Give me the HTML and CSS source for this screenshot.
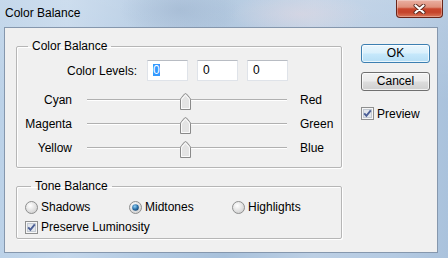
FILE: index.html
```html
<!DOCTYPE html>
<html>
<head>
<meta charset="utf-8">
<link rel="stylesheet" href="styles.css">
</head>
<body>
<div class="window">
  <div class="titlebar">
    <span class="title">Color Balance</span>
    <div class="close">
      <svg width="13" height="10" viewBox="0 0 13 10"><path d="M2.5 1.5 L10.5 8.5 M10.5 1.5 L2.5 8.5" stroke="#5a2a20" stroke-width="4" stroke-linecap="round"/><path d="M2.5 1.5 L10.5 8.5 M10.5 1.5 L2.5 8.5" stroke="#fff" stroke-width="2.2" stroke-linecap="round"/></svg>
    </div>
  </div>
  <div class="client">
    <div class="main">
      <fieldset class="group g1">
        <legend>Color Balance</legend>
        <div class="levels">
          <span class="lvl-label">Color Levels:</span>
          <span class="input"><span class="sel">0</span></span>
          <span class="input">0</span>
          <span class="input">0</span>
        </div>
        <div class="srow">
          <span class="sl">Cyan</span>
          <span class="track"><span class="thumb" style="left:93px"><svg width="11" height="17" viewBox="0 0 11 17"><path d="M0.5 16.5 V6.5 Q0.5 5.5 1.5 4.5 L4.5 1 Q5.5 0 6.5 1 L9.5 4.5 Q10.5 5.5 10.5 6.5 V16.5 Z" fill="#e4e4e4" stroke="#8a8a8a"/><path d="M1.5 15.5 V6.8 L5.5 2 L9.5 6.8 V15.5 Z" fill="none" stroke="#fafafa"/></svg></span></span>
          <span class="sr">Red</span>
        </div>
        <div class="srow">
          <span class="sl">Magenta</span>
          <span class="track"><span class="thumb" style="left:93px"><svg width="11" height="17" viewBox="0 0 11 17"><path d="M0.5 16.5 V6.5 Q0.5 5.5 1.5 4.5 L4.5 1 Q5.5 0 6.5 1 L9.5 4.5 Q10.5 5.5 10.5 6.5 V16.5 Z" fill="#e4e4e4" stroke="#8a8a8a"/><path d="M1.5 15.5 V6.8 L5.5 2 L9.5 6.8 V15.5 Z" fill="none" stroke="#fafafa"/></svg></span></span>
          <span class="sr">Green</span>
        </div>
        <div class="srow">
          <span class="sl">Yellow</span>
          <span class="track"><span class="thumb" style="left:93px"><svg width="11" height="17" viewBox="0 0 11 17"><path d="M0.5 16.5 V6.5 Q0.5 5.5 1.5 4.5 L4.5 1 Q5.5 0 6.5 1 L9.5 4.5 Q10.5 5.5 10.5 6.5 V16.5 Z" fill="#e4e4e4" stroke="#8a8a8a"/><path d="M1.5 15.5 V6.8 L5.5 2 L9.5 6.8 V15.5 Z" fill="none" stroke="#fafafa"/></svg></span></span>
          <span class="sr">Blue</span>
        </div>
      </fieldset>
      <fieldset class="group g2">
        <legend>Tone Balance</legend>
        <div class="radios">
          <span class="opt"><svg width="13" height="13" viewBox="0 0 13 13"><defs><radialGradient id="r1" cx="0.4" cy="0.35" r="0.7"><stop offset="0" stop-color="#ffffff"/><stop offset="1" stop-color="#cfcfcf"/></radialGradient></defs><circle cx="6.5" cy="6.5" r="6" fill="url(#r1)" stroke="#8e8f8f"/></svg>Shadows</span>
          <span class="opt"><svg width="13" height="13" viewBox="0 0 13 13"><defs><radialGradient id="r2" cx="0.4" cy="0.35" r="0.7"><stop offset="0" stop-color="#ffffff"/><stop offset="1" stop-color="#cfcfcf"/></radialGradient><radialGradient id="d2" cx="0.4" cy="0.35" r="0.7"><stop offset="0" stop-color="#8fd0f5"/><stop offset="0.6" stop-color="#2a6fa8"/><stop offset="1" stop-color="#15446e"/></radialGradient></defs><circle cx="6.5" cy="6.5" r="6" fill="url(#r2)" stroke="#8e8f8f"/><circle cx="6.5" cy="6.5" r="3.3" fill="url(#d2)"/></svg>Midtones</span>
          <span class="opt"><svg width="13" height="13" viewBox="0 0 13 13"><defs><radialGradient id="r3" cx="0.4" cy="0.35" r="0.7"><stop offset="0" stop-color="#ffffff"/><stop offset="1" stop-color="#cfcfcf"/></radialGradient></defs><circle cx="6.5" cy="6.5" r="6" fill="url(#r3)" stroke="#8e8f8f"/></svg>Highlights</span>
        </div>
        <div class="check-row">
          <span class="opt"><svg width="13" height="13" viewBox="0 0 13 13"><rect x="0.5" y="0.5" width="12" height="12" fill="#f6f6f6" stroke="#8e8f8f"/><rect x="2.5" y="2.5" width="8" height="8" fill="#e2e6ec" stroke="#c3cad3"/><path d="M3.2 6.3 L5.4 8.8 L9.8 3.4" fill="none" stroke="#4b5f96" stroke-width="1.9"/></svg>Preserve Luminosity</span>
        </div>
      </fieldset>
    </div>
    <div class="side">
      <div class="btn ok">OK</div>
      <div class="btn cancel">Cancel</div>
      <div class="preview"><svg width="13" height="13" viewBox="0 0 13 13"><rect x="0.5" y="0.5" width="12" height="12" fill="#f6f6f6" stroke="#8e8f8f"/><rect x="2.5" y="2.5" width="8" height="8" fill="#e2e6ec" stroke="#c3cad3"/><path d="M3.2 6.3 L5.4 8.8 L9.8 3.4" fill="none" stroke="#4b5f96" stroke-width="1.9"/></svg>Preview</div>
    </div>
  </div>
</div>
</body>
</html>
```
FILE: styles.css
```css
* { box-sizing: border-box; }
html, body { margin: 0; padding: 0; }
body {
  width: 448px;
  height: 258px;
  overflow: hidden;
  font-family: "Liberation Sans", Arial, sans-serif;
  font-size: 12px;
  color: #000;
}
.window {
  width: 448px;
  height: 258px;
  display: flex;
  flex-direction: column;
  background:
    radial-gradient(ellipse 70px 22px at 300px 14px, rgba(225,215,225,0.55), rgba(225,215,225,0) 100%),
    radial-gradient(ellipse 60px 30px at 180px 10px, rgba(150,172,200,0.45), rgba(150,172,200,0) 100%),
    linear-gradient(to bottom, rgba(255,255,255,0.15), rgba(255,255,255,0) 40%),
    linear-gradient(to right, #bcd2e8 0%, #c4d7eb 15%, #b3cae2 32%, #a8c1db 50%, #bccfe4 70%, #b4cae2 88%, #aac2dc 100%);
}
.titlebar {
  height: 27px;
  display: flex;
  align-items: flex-start;
}
.title {
  padding: 6px 0 0 5px;
  line-height: 14px;
  color: #000;
}
.close {
  margin-left: auto;
  margin-right: 5px;
  width: 47px;
  height: 18px;
  border: 1px solid #6a2418;
  border-top: none;
  border-radius: 0 0 4px 4px;
  background: linear-gradient(to bottom, #eab0a2 0%, #df907b 42%, #c9472e 52%, #c5432a 72%, #d9775a 100%);
  box-shadow: inset 0 0 0 1px rgba(255,255,255,0.3);
  display: flex;
  align-items: center;
  justify-content: center;
}
.client {
  flex: 1;
  margin: 0 10px 5px 4px;
  background: #f0f0f0;
  border: 1px solid #8597ad;
  display: grid;
  grid-template-columns: 326px 69px;
  column-gap: 19px;
  align-items: start;
  padding: 11px 0 0 11px;
}
.group {
  margin: 0;
  padding: 0;
  min-width: 0;
  border: 1px solid #b6b6b6;
  border-radius: 2px;
  box-shadow: 1px 1px 0 #fff, inset 1px 1px 0 #fff;
}
.group legend {
  padding: 0 4px;
  line-height: 14px;
}
.g1 { padding: 7px 0 7px 0; }
.g1 legend { margin-left: 11px; }
.g2 { margin-top: 11px; padding: 5px 0 2px 8px; }
.g2 legend { margin-left: 6px; }

.levels {
  display: flex;
  align-items: center;
  height: 21px;
}
.lvl-label {
  width: 120px;
  text-align: right;
  margin-right: 10px;
}
.input {
  width: 41px;
  height: 21px;
  margin-right: 9px;
  background: #fff;
  border: 1px solid #dfe3e9;
  border-top-color: #b8bcc3;
  padding-left: 5px;
  line-height: 19px;
}
.sel {
  background: #3399ff;
  color: #fff;
  display: inline-block;
  line-height: 12px;
}
.srow {
  display: grid;
  grid-template-columns: 57px 200px auto;
  column-gap: 13px;
  align-items: center;
  height: 24px;
}
.g1 .levels + .srow { margin-top: 7px; }
.sl {
  text-align: right;
  padding-right: 2px;
}
.track {
  position: relative;
  height: 2px;
  border-top: 1px solid #b0b0b0;
  border-bottom: 1px solid #ffffff;
}
.thumb {
  position: absolute;
  top: -7px;
  width: 11px;
  height: 17px;
  display: block;
}
.thumb svg { display: block; }

.radios {
  display: grid;
  grid-template-columns: 104px 103px auto;
  height: 18px;
  align-items: center;
}
.opt {
  display: flex;
  align-items: center;
  gap: 3px;
}
.opt svg { display: block; flex: none; }
.check-row {
  margin-top: 2px;
  height: 18px;
  display: flex;
  align-items: center;
}

.side {
  display: flex;
  flex-direction: column;
  padding-top: 5px;
}
.btn {
  width: 69px;
  height: 19px;
  border: 1px solid #707070;
  border-radius: 3px;
  text-align: center;
  line-height: 17px;
  background: linear-gradient(to bottom, #f2f2f2 0%, #ebebeb 48%, #dddddd 52%, #cfcfcf 100%);
  box-shadow: inset 0 0 0 1px rgba(255,255,255,0.7);
}
.btn.ok {
  border-color: #3c7fb1;
  background: linear-gradient(to bottom, #eaf6fd 0%, #d9f0fc 48%, #c6e8fb 52%, #b6def5 100%);
}
.btn.cancel { margin-top: 9px; }
.preview {
  margin-top: 16px;
  display: flex;
  align-items: center;
  gap: 3px;
  height: 13px;
}
.preview svg { display: block; flex: none; }
```
